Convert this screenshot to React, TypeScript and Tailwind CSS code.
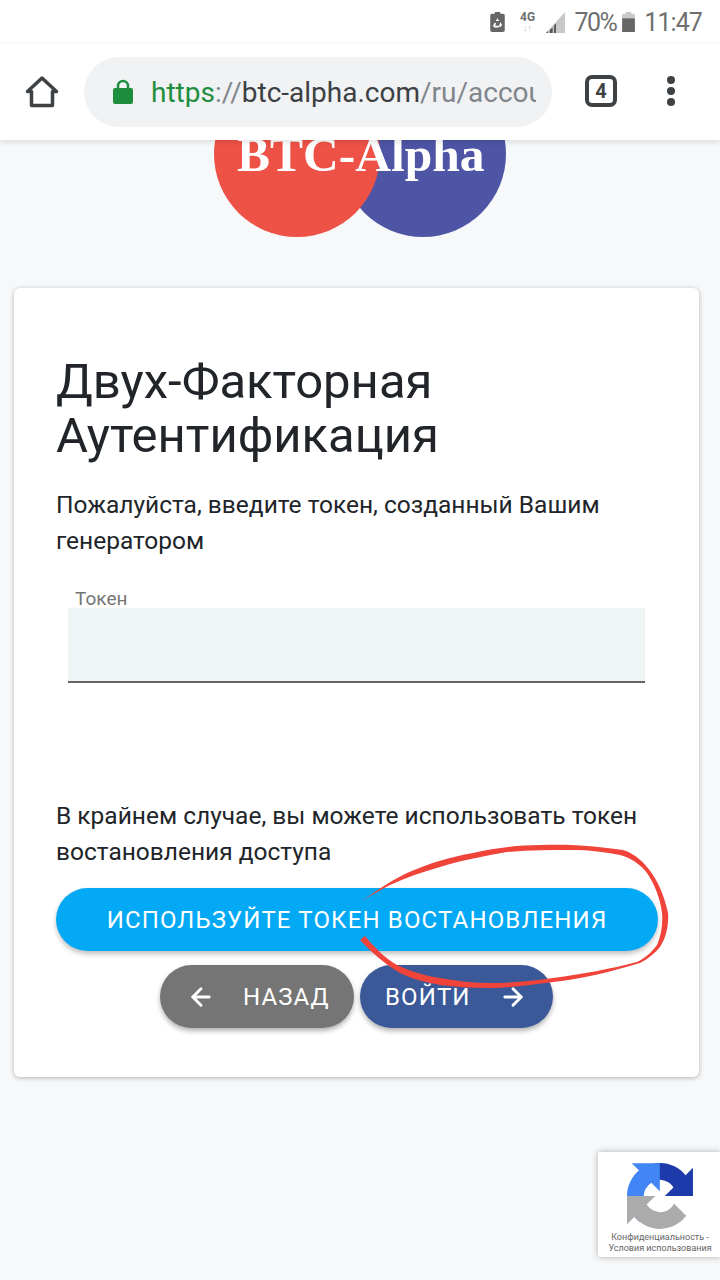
import { ArrowLeft, ArrowRight } from 'lucide-react';

function StatusBar() {
  return (
    <div className="h-[44px] bg-white flex items-center justify-end pr-[18px] text-[25px] leading-none text-[#6f6f6f] font-['Roboto',sans-serif]">
      {/* battery saver */}
      <svg width="15" height="20" viewBox="0 0 16 22" className="mr-[14px]">
        <path d="M5 0h6v2h3a2 2 0 0 1 2 2v16a2 2 0 0 1-2 2H2a2 2 0 0 1-2-2V4a2 2 0 0 1 2-2h3z" fill="#666" />
        <path d="M8 7l2 3H6zM4.500 12h2l-1 3h4v2H4.500L3 15zM11 11l2 3-1.500 2.500H10v-2z" fill="#fff" />
      </svg>
      <div className="flex flex-col items-center mr-[8px] w-[18px]">
        <span className="text-[12px] font-bold leading-[13px]">4G</span>
        <span className="text-[9px] leading-[9px] text-[#bbb]">↓↑</span>
      </div>
      <svg width="21" height="21" viewBox="0 0 20 22" className="mr-[9px]">
        <path d="M20 0v22H0z" fill="#c8c8c8" />
        <path d="M0 22h2v-2zM4 22h3v-6l-3 3zM8.500 22h2V12l-2 2z" fill="#555" />
      </svg>
      <span className="mr-[6px] tracking-[-1.6px]">70%</span>
      <svg width="13" height="20" viewBox="0 0 14 22" className="mr-[9px]">
        <path d="M4 0h6v2h4v20H0V2h4z" fill="#c9c9c9" />
        <path d="M0 7h14v15H0z" fill="#666" />
      </svg>
      <span className="tracking-[-0.9px]">11:47</span>
    </div>
  );
}

function Toolbar() {
  return (
    <div className="h-[96px] bg-white flex items-center relative z-10 shadow-[0_2px_6px_rgba(0,0,0,0.12)] font-['Roboto',sans-serif]">
      <div className="w-[84px] flex justify-center">
        <svg width="34" height="34" viewBox="0 0 34 34" fill="none" stroke="#3f4245" strokeWidth="3.500" strokeLinejoin="round">
          <path d="M2.500 16.500L17 3l14.500 13.500H27.500V30.500H6.500V16.500z" />
        </svg>
      </div>
      <div className="w-[468px] h-[70px] rounded-full bg-[#f0f2f4] flex items-center pl-[29px] pr-[16px]">
        <svg width="20" height="26" viewBox="0 0 20 26" className="shrink-0">
          <path d="M5 10V7a5 5 0 0 1 10 0v3" fill="none" stroke="#1e8e3e" strokeWidth="2.500" />
          <rect y="9" width="20" height="16" rx="2" fill="#1e8e3e" />
        </svg>
        <div className="ml-[18px] pt-[2px] text-[28px] leading-none whitespace-nowrap w-[385px] overflow-hidden">
          <span className="text-[#1e8e3e]">https</span>
          <span className="text-[#80868b]">://</span>
          <span className="text-[#3c4043]">btc-alpha.com</span>
          <span className="text-[#80868b]">/ru/account</span>
        </div>
      </div>
      <div className="ml-[33px] mb-[3px] w-[32px] h-[32px] rounded-[7px] border-4 border-[#3f4245] flex items-center justify-center text-[20px] font-bold text-[#3f4245]">
        4
      </div>
      <div className="ml-[50px] mb-[2px] flex flex-col gap-[3px]">
        <div className="w-[8px] h-[8px] rounded-full bg-[#3f4245]" />
        <div className="w-[8px] h-[8px] rounded-full bg-[#3f4245]" />
        <div className="w-[8px] h-[8px] rounded-full bg-[#3f4245]" />
      </div>
    </div>
  );
}

function Logo() {
  return (
    <div className="h-[148px] relative overflow-hidden">
      <div className="absolute left-[340px] top-[-69px] w-[166px] h-[166px] rounded-full bg-[#4e55a5]" />
      <div className="absolute left-[214px] top-[-69px] w-[166px] h-[166px] rounded-full bg-[#ee5246]" />
      <div className="absolute left-[237px] top-[-15px] text-[49.500px] leading-[60px] font-bold text-white font-['Liberation_Serif',serif] whitespace-nowrap">
        BTC-Alpha
      </div>
    </div>
  );
}

function Scribble() {
  return (
    <svg width="720" height="1280" viewBox="0 0 720 1280" className="absolute inset-0 pointer-events-none z-20">
      <path
        fill="#f0433a"
        d="M360 902C375 892 390 881 407 873C430 863 450 857 473 853C495 848 518 845 540 845C565 844 590 845 623 850C640 855 660 875 668 913C669 925 666 938 660 947C655 953 648 959 640 963C610 972 582 979 553 982C530 985 510 988 490 988C472 988 455 987 440 985C425 982 412 979 400 973C385 964 372 953 360 940L365 936C375 948 385 958 397 965C410 971 425 976 440 978C457 981 473 983 490 983C512 983 533 981 553 978C583 974 610 969 637 962C645 958 652 952 657 945C661 936 663 925 662 913C660 898 655 885 647 873C640 864 631 858 620 855C605 852 590 850 573 850C552 850 530 850 507 852C485 856 462 860 440 867C422 872 405 878 390 885C380 890 370 896 360 902Z"
      />
    </svg>
  );
}

function Recaptcha() {
  return (
    <div className="absolute left-[598px] top-[1152px] w-[122px] h-[105px] bg-white rounded-l-[2px] shadow-[0_0_6px_rgba(0,0,0,0.3)] flex flex-col items-center pt-[11px] font-['Roboto',sans-serif]">
      <svg width="66" height="66" viewBox="0 0 64 64" className="ml-[1px]">
        <path d="M64 31.955l-.033-1.37V4.687l-7.16 7.16C50.948 4.674 42.033.093 32.05.093c-10.4 0-19.622 4.96-25.458 12.64l11.736 11.86a15.55 15.55 0 0 1 4.754-5.334c2.05-1.6 4.952-2.906 8.968-2.906.485 0 .86.057 1.135.163 4.976.393 9.288 3.14 11.828 7.124l-8.307 8.307 26.3.001" fill="#1c3aa9" />
        <path d="M31.862.094l-1.37.033H4.594l7.16 7.16C4.58 13.147 0 22.06 0 32.046c0 10.4 4.96 19.622 12.64 25.458l11.86-11.736a15.55 15.55 0 0 1-5.334-4.754c-1.6-2.05-2.906-4.952-2.906-8.968 0-.485.057-.86.163-1.135.393-4.976 3.14-9.288 7.124-11.828l8.307 8.307.001-26.3" fill="#4285f4" />
        <path d="M.001 32.045l.033 1.37v25.898l7.16-7.16c5.86 7.173 14.774 11.754 24.76 11.754 10.4 0 19.622-4.96 25.458-12.64l-11.736-11.86a15.55 15.55 0 0 1-4.754 5.334c-2.05 1.6-4.952 2.906-8.968 2.906-.485 0-.86-.057-1.135-.163-4.976-.393-9.288-3.14-11.828-7.124l8.307-8.307-26.3-.001" fill="#ababab" />
      </svg>
      <div className="mt-[3px] ml-[2px] text-[9px] leading-[11px] text-[#666] text-center whitespace-nowrap">
        Конфиденциальность -<br />Условия использования
      </div>
    </div>
  );
}

export default function App() {
  return (
    <div className="w-[720px] h-[1280px] relative overflow-hidden bg-[#f7f8fa] font-['Roboto',sans-serif] text-[#212529]">
      <StatusBar />
      <Toolbar />
      <Logo />

      <div className="mx-[14px] w-[685px] h-[789px] bg-white rounded-[6px] shadow-[0_1px_5px_rgba(0,0,0,0.28)] px-[42px] pt-[67px]">
        <h1 className="text-[49px] leading-[54px] font-normal">Двух-Факторная Аутентификация</h1>

        <p className="mt-[24px] text-[24.500px] leading-[36px]">Пожалуйста, введите токен, созданный Вашим генератором</p>

        <div className="mt-[30px] ml-[12px] w-[577px] relative">
          <div className="text-[19px] leading-[19px] text-[#757575] pl-[7px]">Токен</div>
          <div className="h-[75px] bg-[#eff4f4] border-b-2 border-[#666]" />
        </div>

        <p className="mt-[115px] text-[24.500px] leading-[36px]">В крайнем случае, вы можете использовать токен востановления доступа</p>

        <button className="mt-[18px] w-[602px] h-[63px] rounded-full bg-[#03a9f4] text-white text-[24px] tracking-[1.15px] shadow-[0_3px_5px_rgba(0,0,0,0.25)]">
          ИСПОЛЬЗУЙТЕ ТОКЕН ВОСТАНОВЛЕНИЯ
        </button>

        <div className="mt-[14px] flex justify-center gap-[6px]">
          <button className="w-[194px] h-[63px] rounded-full bg-[#757575] text-white text-[24px] tracking-[1.1px] flex items-center pl-[27px] shadow-[0_3px_5px_rgba(0,0,0,0.3)]">
            <ArrowLeft size={28} strokeWidth={2.5} />
            <span className="ml-[28px]">НАЗАД</span>
          </button>
          <button className="w-[193px] h-[63px] rounded-full bg-[#3b5998] text-white text-[24px] tracking-[1.1px] flex items-center pl-[25px] shadow-[0_3px_5px_rgba(0,0,0,0.3)]">
            <span>ВОЙТИ</span>
            <ArrowRight size={28} strokeWidth={2.5} className="ml-[28px]" />
          </button>
        </div>
      </div>

      <Scribble />
      <Recaptcha />
    </div>
  );
}
